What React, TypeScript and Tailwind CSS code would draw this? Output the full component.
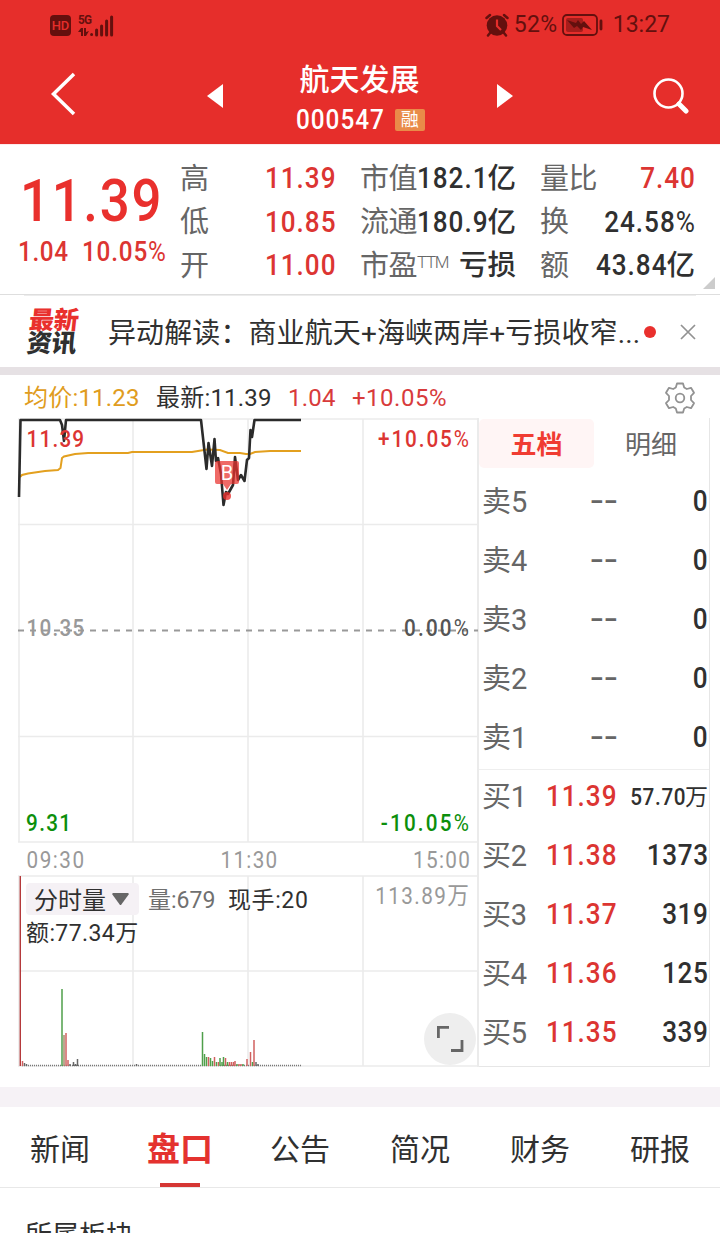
import React from 'react'

const quotes = [
  [
    { label: '高', value: '11.39', red: true },
    { label: '低', value: '10.85', red: true },
    { label: '开', value: '11.00', red: true },
  ],
  [
    { label: '市值', value: '182.1', unit: '亿' },
    { label: '流通', value: '180.9', unit: '亿' },
    { label: '市盈', sup: 'TTM', value: '', unit: '亏损' },
  ],
  [
    { label: '量比', value: '7.40', red: true },
    { label: '换', value: '24.58%' },
    { label: '额', value: '43.84', unit: '亿' },
  ],
]

const sells = ['卖5', '卖4', '卖3', '卖2', '卖1']

const buys = [
  { label: '买1', price: '11.39', qty: '57.70', unit: '万' },
  { label: '买2', price: '11.38', qty: '1373' },
  { label: '买3', price: '11.37', qty: '319' },
  { label: '买4', price: '11.36', qty: '125' },
  { label: '买5', price: '11.35', qty: '339' },
]

const tabs = ['新闻', '盘口', '公告', '简况', '财务', '研报']

const pricePoints =
  '19,79 20.5,2 60,2 62,7 64,23 66,2 201,2 206.5,51 208.5,25 212,48 214.5,21 216,43 218,40 221,56 223.5,87 226,74 228,76 233,67 235,39 238,62 241,57 244.5,63 247,42 249,40 250.5,12 252,19 254.5,2 301,2'

const avgPoints =
  '20,59 22,57 28,55.5 45,53 58,52 60.5,50 62,40 64,38.5 75,36 88,35 128,35 132,34 192,34 198,33 207,31.5 220,32 228,35 240,35 246,36 250,36 255,34 270,33 301,33'

const G = '#4f9f4a'
const R = '#d0605f'
const N = '#666666'

// x, height, colour
const volumes: [number, number, string][] = [
  [22.5, 5, R], [24.5, 3, N], [26.5, 2, N],
  [62, 77, G], [64, 31, '#a58a6a'], [66, 33, R], [68, 6, R], [70, 2, N], [73.5, 4, N], [75.5, 2, N], [77.5, 7, N],
  [136.5, 2, N],
  [202.5, 34, G], [204.5, 12, G], [206.5, 9, G], [208.5, 9, R], [210.5, 8, G], [212.5, 5, G], [214.5, 9, R],
  [216.5, 4, G], [218.5, 4, R], [220, 8, G], [222, 4, G], [223.5, 9, G], [225.5, 8, R], [227.5, 4, G],
  [229.5, 4, R], [231.5, 4, R], [233.5, 4, R], [235, 5, R], [237, 2, G], [239, 2, R], [241, 2, R], [243, 2, G],
  [247, 7, R], [250.5, 14, R], [252.5, 4, G], [254, 26, R], [256, 4, N], [258, 2, N],
]

// condensed digits, the percent sign is lighter than the number
const Num = ({ children, className = '-ml-2 origin-right tracking-[1.100px]' }: { children: string; className?: string }) => (
  <span className={'-mr-px inline-block scale-x-90 ' + className}>
    {children.replace('%', '')}
    {children.endsWith('%') && <span className="font-normal">%</span>}
  </span>
)

const StatusBar = () => (
  <div className="flex h-[50px] items-center justify-between pl-[50px] pr-[50px] text-[#64100e]">
    <div className="flex items-center gap-[7px]">
      <div className="flex h-[21px] w-[21px] items-center justify-center rounded-[4px] bg-[#64100e] text-[13px] font-medium leading-[21px] text-[#e62e2b]">HD</div>
      <div className="flex items-end">
        <div className="flex w-3 flex-col">
          <span className="h-[13px] origin-left scale-x-90 text-[13px] font-bold leading-[10px] tracking-[-0.800px]">5G</span>
          <svg width="12" height="9" viewBox="0 0 12 9" fill="currentColor">
            <path d="M3 0h2v8H3V4H0zM6 0h2v4l3-1-3 5H6z" />
          </svg>
        </div>
        <svg width="24" height="23" viewBox="0 0 24 23" stroke="currentColor" strokeWidth="3" strokeLinecap="round">
          <path d="M1.600 20.400v.2M6.600 16v5M11.600 12v9M16.600 7v14M21.600 3v18" />
        </svg>
      </div>
    </div>
    <div className="flex items-center text-[23px] leading-6">
      <svg width="24" height="24" viewBox="0 0 24 24" fill="currentColor">
        <circle cx="12" cy="12.500" r="10.300" />
        <path d="M1.500 5 5 2M19 2l3.500 3M5 20l-2 2.500M19 20l2 2.500" stroke="currentColor" strokeWidth="2.500" strokeLinecap="round" />
        <path d="M12 6.500V13l4 4" fill="none" stroke="#e62e2b" strokeWidth="2.200" />
      </svg>
      <span className="ml-[5px] w-[45px] whitespace-nowrap tracking-[0.300px]">52%</span>
      <svg className="ml-[3px]" width="42" height="22" viewBox="0 0 42 22">
        <rect x="1" y="1" width="34" height="20" rx="4" fill="none" stroke="currentColor" strokeWidth="1.800" />
        <rect x="4" y="4" width="17" height="14" rx="2" fill="#a51d1b" />
        <path d="M5 6l9 3 2-3 3 4 3-3 8 9-9-3-2 3-4-4-3 2z" fill="currentColor" />
        <path d="M39 7v8" stroke="currentColor" strokeWidth="2.800" strokeLinecap="round" />
      </svg>
      <span className="ml-[9px]">13:27</span>
    </div>
  </div>
)

const TitleBar = () => (
  <div className="flex h-[92px] items-center text-white">
    <svg className="-mt-[4px] ml-[50px]" width="26" height="44" viewBox="0 0 26 44" fill="none" stroke="currentColor" strokeWidth="3.500">
      <path d="M24 2 3.500 22 24 42" />
    </svg>
    <svg className="ml-[131px]" width="16" height="24" viewBox="0 0 16 24" fill="currentColor">
      <path d="M16 0v24L0 12z" />
    </svg>
    <div className="flex w-[273px] flex-col items-center pt-px">
      <div className="h-[41px] text-[30px] font-medium leading-[38px]">航天发展</div>
      <div className="flex h-[30px] items-center pt-[6px]">
        <span className="-mr-[8px] ml-[2px] origin-left scale-x-90 text-[27px] font-medium leading-[30px] tracking-[1.100px]">000547</span>
        <span className="ml-[8px] flex h-[22px] w-[30px] items-center justify-center rounded-[2px] bg-[#e98b49] text-[18px] leading-[22px]">融</span>
      </div>
    </div>
    <svg className="ml-px" width="16" height="24" viewBox="0 0 16 24" fill="currentColor">
      <path d="M0 0v24l16-12z" />
    </svg>
    <svg className="ml-[140px]" width="36" height="36" viewBox="0 0 36 36" fill="none" stroke="currentColor">
      <circle cx="15.500" cy="15.500" r="14" strokeWidth="2.600" />
      <path d="m26 26 7 7" strokeWidth="5" strokeLinecap="round" />
    </svg>
  </div>
)

const Quote = () => (
  <section className="relative flex h-[150px] border-t border-[#fdeaec] text-[#303030]">
    <div className="w-[180px] font-medium text-[#e9302d]">
      <div className="ml-[20px] mt-[20px] h-[71px] origin-left scale-x-88 text-[60px] leading-[72px] tracking-[1.900px]">11.39</div>
      <div className="ml-[18px] flex gap-[9px] text-[27px] leading-[32px] text-[#dc3532]">
        <Num className="origin-left tracking-[0.700px]">1.04</Num>
        <Num className="origin-left tracking-[0.900px]">10.05%</Num>
      </div>
    </div>
    {quotes.map((col, i) => (
      <div key={i} className={['w-[155px]', 'ml-[25px] w-[156px]', 'ml-[24px] w-[155px]'][i] + ' pt-[12px]'}>
        {col.map(({ label, value, unit, red, sup }: any) => (
          <div key={label} className="flex h-[43.500px] items-center justify-between whitespace-nowrap">
            <span className="flex pt-px text-[29px] leading-[43px] tracking-[-0.500px] text-[#666]">
              {label}
              {sup && <sup className="top-0 text-[17px] font-light leading-[34px] tracking-[-1.400px]">{sup}</sup>}
            </span>
            <span className={(red ? 'text-[#dc3532] ' : '') + 'text-[29px] font-medium leading-[43px]'}>
              {value && <Num>{value}</Num>}
              {unit && <span className="text-[28.500px]">{unit}</span>}
            </span>
          </div>
        ))}
      </div>
    ))}
    <svg className="absolute right-[5px] bottom-[5px]" width="12" height="12" viewBox="0 0 12 12">
      <path d="M12 0v12H0z" fill="#ccc" />
    </svg>
  </section>
)

const News = () => (
  <section className="h-[73px] border-t border-[#dedede]">
    <div className="mx-6 h-px bg-[#ececec]" />
    <div className="flex h-[71px] items-center">
      <div className="ml-[28px] w-[50px] -skew-x-6 text-[25px] font-black leading-[23px] tracking-[-0.200px] text-[#303030]">
        <div className="text-[#e9302d]">最新</div>
        <div>资讯</div>
      </div>
      <div className="ml-[30px] w-[536px] whitespace-nowrap pt-[5px] text-[28px] leading-[40px] tracking-[0.100px] text-[#303030]">异动解读：商业航天+海峡两岸+亏损收窄...</div>
      <div className="h-3 w-3 rounded-full bg-[#e9302d]" />
      <svg className="ml-[24px]" width="16" height="16" viewBox="0 0 16 16" stroke="#929292" strokeWidth="1.700">
        <path d="m1 1 14 14M15 1 1 15" />
      </svg>
    </div>
  </section>
)

const Legend = () => (
  <div className="flex h-[43px] items-center pl-[24px] pt-[3px] text-[24px] leading-[40px] tracking-[0.200px]">
    <span className="w-[132px] text-[#e09c20]">均价:11.23</span>
    <span className="w-[132px] text-[#303030]">最新:11.39</span>
    <span className="w-[64px] text-[#d83b3b]">1.04</span>
    <span className="w-[312px] tracking-[0.500px] text-[#d83b3b]">+10.05%</span>
    <svg width="32" height="32" viewBox="0 0 32 32" fill="none" stroke="#929292" strokeWidth="1.800" strokeLinejoin="round">
      <path d="M13 1.500h6l1.200 4 2.600 1.500 4.200-1.200 3 5-3 3.200v4l3 3.200-3 5-4.200-1.200-2.600 1.500-1.200 4h-6l-1.200-4-2.600-1.500L5 26.200l-3-5L5 18v-4l-3-3.200 3-5L9.200 7l2.600-1.500z" />
      <circle cx="16" cy="16" r="4.300" />
    </svg>
  </div>
)

const Chart = () => (
  <div className="relative h-[650px] w-[478px]">
    <svg className="block" width="480" height="650" viewBox="0 0 480 650" fontSize="23" fontWeight="500">
      <g stroke="#ebebeb" strokeWidth="1.600">
        <path d="M18 1h460M18 106.500h460M18 318.500h460M18 424h460M18 458h460M18 553h460M18 648h460" />
        <path d="M19 1v423M133 1v423M248 1v423M363 1v423M19 458v190M133 458v190M248 458v190M363 458v190" />
        <path d="M478 0v649" strokeWidth="2" />
      </g>
      <path d="M18 212.500h460" stroke="#999" strokeWidth="1.800" strokeDasharray="6 6" />
      <polyline points={avgPoints} fill="none" stroke="#e3a01f" strokeWidth="2" />
      <polyline points={pricePoints} fill="none" stroke="#2b2b2b" strokeWidth="2.600" strokeLinejoin="round" />

      {/* axis labels, squeezed horizontally */}
      <g transform="scale(.9 1)">
        <text x="29.500" y="29" fill="#dc3532" textLength="64">11.39</text>
        <text x="420" y="29" fill="#dc3532" textLength="101">+10.05<tspan fontWeight="400">%</tspan></text>
        <text x="29.500" y="218" fill="#999" textLength="64">10.35</text>
        <text x="449" y="218" fill="#555" textLength="72">0.00<tspan fontWeight="400">%</tspan></text>
        <text x="29" y="413" fill="#0c8f0c" textLength="50">9.31</text>
        <text x="423" y="413" fill="#0c8f0c" textLength="98">-10.05<tspan fontWeight="400">%</tspan></text>
        <g fill="#999" fontWeight="400">
          <text x="29.500" y="450" textLength="64">09:30</text>
          <text x="245" y="450" textLength="63">11:30</text>
          <text x="459" y="450" textLength="63">15:00</text>
          <text x="417" y="486" textLength="104">113.89<tspan fontSize="24">万</tspan></text>
        </g>
      </g>

      <circle cx="227" cy="78" r="4" fill="#e9302d" opacity=".8" />
      <path d="M217 43h20a2 2 0 0 1 2 2v19a2 2 0 0 1-2 2h-6l-4 6-4-6h-6a2 2 0 0 1-2-2V45a2 2 0 0 1 2-2z" fill="#e9302d" opacity=".72" />
      <text x="227" y="62" textAnchor="middle" fill="#fff" fontSize="20" fontWeight="400">B</text>

      <path d="M22 647.500h280" stroke="#777" strokeWidth="1.500" strokeDasharray="1 1" />
      <path d="M20.300 458v190" stroke="#b5393b" strokeWidth="1.400" />
      {volumes.map(([x, h, color]) => (
        <path key={x} d={`M${x} 648v-${h}`} stroke={color} strokeWidth="1.500" />
      ))}
    </svg>

    <div className="absolute left-[26px] top-[465px] text-[#303030]">
      <div className="flex h-8 items-center text-[24px] leading-8">
        <div className="flex h-8 w-[113px] items-center rounded-[4px] bg-[#f5f1f5] pl-2">
          <span className="pt-[3px]">分时量</span>
          <svg className="ml-[6px]" width="17" height="12" viewBox="0 0 17 12" fill="#666">
            <path d="M1 0h15l1 1-8 11h-1L0 1z" />
          </svg>
        </div>
        <span className="ml-[9px] w-[80px] pt-[3px] text-[23px] text-[#707070]">量:679</span>
        <span className="pt-[3px] text-[23px] tracking-[0.600px]">现手:20</span>
      </div>
      <div className="mt-[3px] text-[23px] leading-8 tracking-[0.400px]">额:77.34万</div>
    </div>

    <div className="absolute left-[424px] top-[595px] flex h-[52px] w-[52px] items-center justify-center rounded-full bg-[#eee]">
      <svg width="28" height="28" viewBox="0 0 28 28" fill="none" stroke="#666" strokeWidth="2.800">
        <path d="M2.400 13V2.400H13M26 15v10.500H15" />
      </svg>
    </div>
  </div>
)

const OrderBook = () => (
  <div className="ml-[1px] h-[649px] w-[231px] border-b border-r border-[#e6e6e6] text-[29px]">
    <div className="flex h-[54px] pt-px">
      <div className="flex h-[49px] w-[115px] items-center justify-center rounded-[5px] bg-[#fff5f5] pt-1 text-[26px] font-bold text-[#f03c32]">五档</div>
      <div className="flex h-[49px] w-[114px] items-center justify-center pt-1 text-[26px] text-[#666]">明细</div>
    </div>
    {sells.map((label) => (
      <div key={label} className="flex h-[59px] items-center pl-[3px] pr-[1px]">
        <span className="w-[63px] pt-[2px] text-[#666]">{label}</span>
        <span className="w-[73px] pt-px text-right">
          <span className="inline-block origin-right scale-x-140 font-medium text-[#666]">--</span>
        </span>
        <span className="flex-1 text-right font-medium text-[#303030]">
          <Num>0</Num>
        </span>
      </div>
    ))}
    <div className="relative top-[3px] -mt-px h-px bg-[#eee]" />
    {buys.map(({ label, price, qty, unit }) => (
      <div key={label} className="flex h-[59px] items-center whitespace-nowrap pl-[3px] pr-[1px]">
        <span className="w-[63px] pt-[2px] tracking-[-0.300px] text-[#666]">{label}</span>
        <span className="w-[71px] text-right font-medium text-[#dc3532]">
          <Num>{price}</Num>
        </span>
        <span className={(unit ? 'pt-1 text-[23px] ' : '') + 'flex-1 text-right font-medium text-[#303030]'}>
          <Num className="-ml-2 origin-right tracking-[0.700px]">{qty}</Num>
          {unit && <span className="font-normal">{unit}</span>}
        </span>
      </div>
    ))}
  </div>
)

const App = () => {
  return (
    <div className="h-[1233px] w-[720px] overflow-hidden bg-white font-[Roboto,'Noto_Sans_CJK_SC',sans-serif]">
      <header className="h-[144px] bg-[#e62e2b]">
        <StatusBar />
        <TitleBar />
      </header>
      <Quote />
      <News />
      <div className="h-2 bg-[#e6e1e4]" />
      <Legend />
      <div className="flex">
        <Chart />
        <OrderBook />
      </div>
      <div className="mt-[19px] h-5 bg-[#f6f2f6]" />
      <nav className="flex h-[81px] border-b border-[#e8e8e8]">
        {tabs.map((tab, i) => (
          <div key={tab} className="relative flex w-[120px] justify-center text-[30px] leading-[85px] text-[#303030]">
            {i === 1 ? <span className="text-[33px] font-bold text-[#e4322f]">{tab}</span> : tab}
            {i === 1 && <div className="absolute bottom-0 h-1 w-10 bg-[#d53634]" />}
          </div>
        ))}
      </nav>
      <div className="pl-[25px] pt-[28px] text-[27px] leading-[40px] text-[#303030]">所属板块</div>
    </div>
  )
}

export default App
